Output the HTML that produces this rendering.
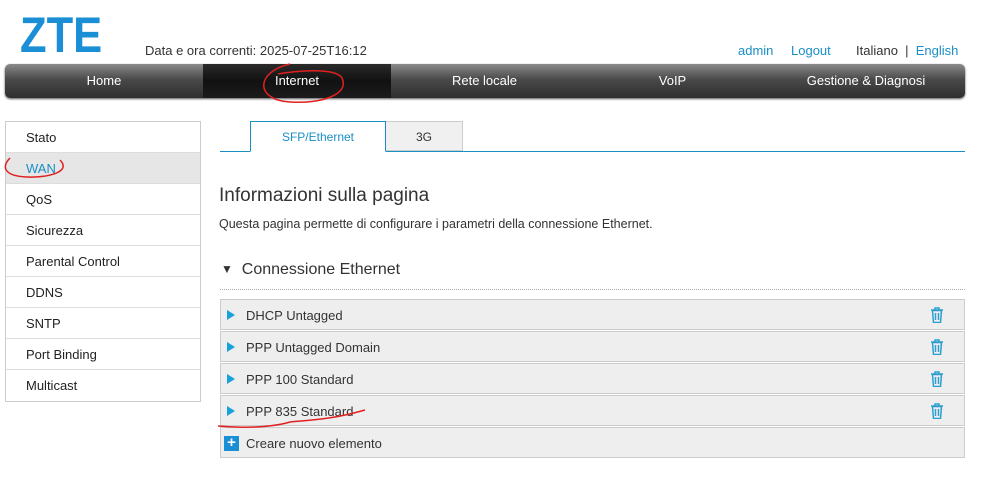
<!DOCTYPE html>
<html><head><style>
*{margin:0;padding:0;box-sizing:border-box}
body{width:981px;height:490px;background:#fff;font-family:"Liberation Sans","Noto Sans CJK SC",sans-serif;font-size:13px;color:#333;position:relative;overflow:hidden}
.a{position:absolute}
.logo{left:20px;top:10px;font-size:50px;font-weight:bold;color:#1a8fd6;letter-spacing:0px;font-family:"Liberation Sans",sans-serif;line-height:50px;transform:scaleX(0.87);transform-origin:left top}
.nav{left:5px;top:64px;width:960px;height:34px;border-radius:5px;background:linear-gradient(#8a8a8a,#4a4a4a 45%,#2e2e2e);box-shadow:0 1px 2px #555;overflow:hidden}
.nav div{position:absolute;top:1px;height:34px;line-height:34px;text-align:center;color:#fff;font-size:13px}
.side{left:5px;top:121px;width:196px;border:1px solid #ccc}
.side div{height:31px;line-height:31px;padding-left:20px;border-bottom:1px solid #ddd;font-size:13px;color:#222}
.side div:last-child{border-bottom:none}
.row{left:220px;width:745px;height:31px;background:#eee;border:1px solid #ccc;line-height:31px;padding-left:25px;font-size:13px;color:#333}
.tri{position:absolute;left:6px;top:10px;width:0;height:0;border-left:8px solid #1aa0dc;border-top:5px solid transparent;border-bottom:5px solid transparent}
.bin{position:absolute;right:20px;top:7px}
</style></head><body>
<div class="a logo">ZTE</div>
<div class="a" style="left:145px;top:43px;font-size:13px;color:#333">Data e ora correnti: 2025-07-25T16:12</div>
<div class="a" style="left:738px;top:43px;font-size:13px;color:#1a8fc6">admin</div>
<div class="a" style="left:791px;top:43px;font-size:13px;color:#1a8fc6">Logout</div>
<div class="a" style="left:856px;top:43px;font-size:13px;color:#333">Italiano &nbsp;| &nbsp;<span style="color:#1a8fc6">English</span></div>
<div class="a nav">
<div style="left:0;width:198px;top:0">Home</div>
<div style="left:198px;width:188px;top:0;background:linear-gradient(#2a2a2a,#111 50%,#1c1c1c)">Internet</div>
<div style="left:386px;width:187px;top:0">Rete locale</div>
<div style="left:573px;width:189px;top:0">VoIP</div>
<div style="left:762px;width:198px;top:0">Gestione &amp; Diagnosi</div>
</div>
<div class="a side">
<div>Stato</div><div style="background:#e6e6e6;color:#1a8fc6">WAN</div><div>QoS</div><div>Sicurezza</div><div>Parental Control</div><div>DDNS</div><div>SNTP</div><div>Port Binding</div><div>Multicast</div>
</div>
<div class="a" style="left:220px;top:151px;width:745px;height:1px;background:#1a8fc6"></div>
<div class="a" style="left:250px;top:121px;width:136px;height:31px;border:1px solid #1a8fc6;border-bottom:1px solid #fff;background:#fff;text-align:center;line-height:30px;color:#1a8fc6;font-size:12px">SFP/Ethernet</div>
<div class="a" style="left:386px;top:121px;width:77px;height:30px;border:1px solid #ccc;border-left:none;background:#f0f0f0;text-align:center;line-height:30px;color:#333;font-size:12px">3G</div>
<div class="a" style="left:219px;top:185px;font-size:19px;color:#333">Informazioni sulla pagina</div>
<div class="a" style="left:219px;top:217px;font-size:12.5px;color:#333">Questa pagina permette di configurare i parametri della connessione Ethernet.</div>
<div class="a" style="left:221px;top:261px;font-size:16px;color:#333"><span style="font-size:12px;position:relative;top:-1px">▼</span>&nbsp;&nbsp;Connessione Ethernet</div>
<div class="a" style="left:220px;top:289px;width:745px;border-top:1px dotted #aaa"></div>
<div class="a row" style="top:299px"><i class="tri"></i>DHCP Untagged<svg class="bin" width="14" height="16" viewBox="0 0 14 16"><path d="M1 3h12M5 3V1h4v2M2.5 3.5l1 12h7l1-12z M5.5 6v7M8.5 6v7" fill="none" stroke="#2a9fd0" stroke-width="1.5"/></svg></div>
<div class="a row" style="top:331px"><i class="tri"></i>PPP Untagged Domain<svg class="bin" width="14" height="16" viewBox="0 0 14 16"><path d="M1 3h12M5 3V1h4v2M2.5 3.5l1 12h7l1-12z M5.5 6v7M8.5 6v7" fill="none" stroke="#2a9fd0" stroke-width="1.5"/></svg></div>
<div class="a row" style="top:363px"><i class="tri"></i>PPP 100 Standard<svg class="bin" width="14" height="16" viewBox="0 0 14 16"><path d="M1 3h12M5 3V1h4v2M2.5 3.5l1 12h7l1-12z M5.5 6v7M8.5 6v7" fill="none" stroke="#2a9fd0" stroke-width="1.5"/></svg></div>
<div class="a row" style="top:395px"><i class="tri"></i>PPP 835 Standard<svg class="bin" width="14" height="16" viewBox="0 0 14 16"><path d="M1 3h12M5 3V1h4v2M2.5 3.5l1 12h7l1-12z M5.5 6v7M8.5 6v7" fill="none" stroke="#2a9fd0" stroke-width="1.5"/></svg></div>
<div class="a row" style="top:427px"><span style="position:absolute;left:3px;top:8px;width:15px;height:15px;background:#1a8fd6;color:#fff;font-weight:bold;line-height:14px;text-align:center;font-size:15px">+</span>Creare nuovo elemento</div>
<svg class="a" style="left:0;top:0" width="981" height="490">
<path d="M290 64 C 255 72,255 100,290 102 C 320 104,350 95,342 78 C 336 68,300 70,278 74" fill="none" stroke="#e02020" stroke-width="1.5"/>
<path d="M10 158 C 0 168,5 178,35 177 C 55 176,70 170,60 160" fill="none" stroke="#e02020" stroke-width="1.5"/>
<path d="M218 426 C 240 428,270 428,290 422 C 310 420,330 420,365 410" fill="none" stroke="#e02020" stroke-width="1.5"/>
</svg>
</body></html>
